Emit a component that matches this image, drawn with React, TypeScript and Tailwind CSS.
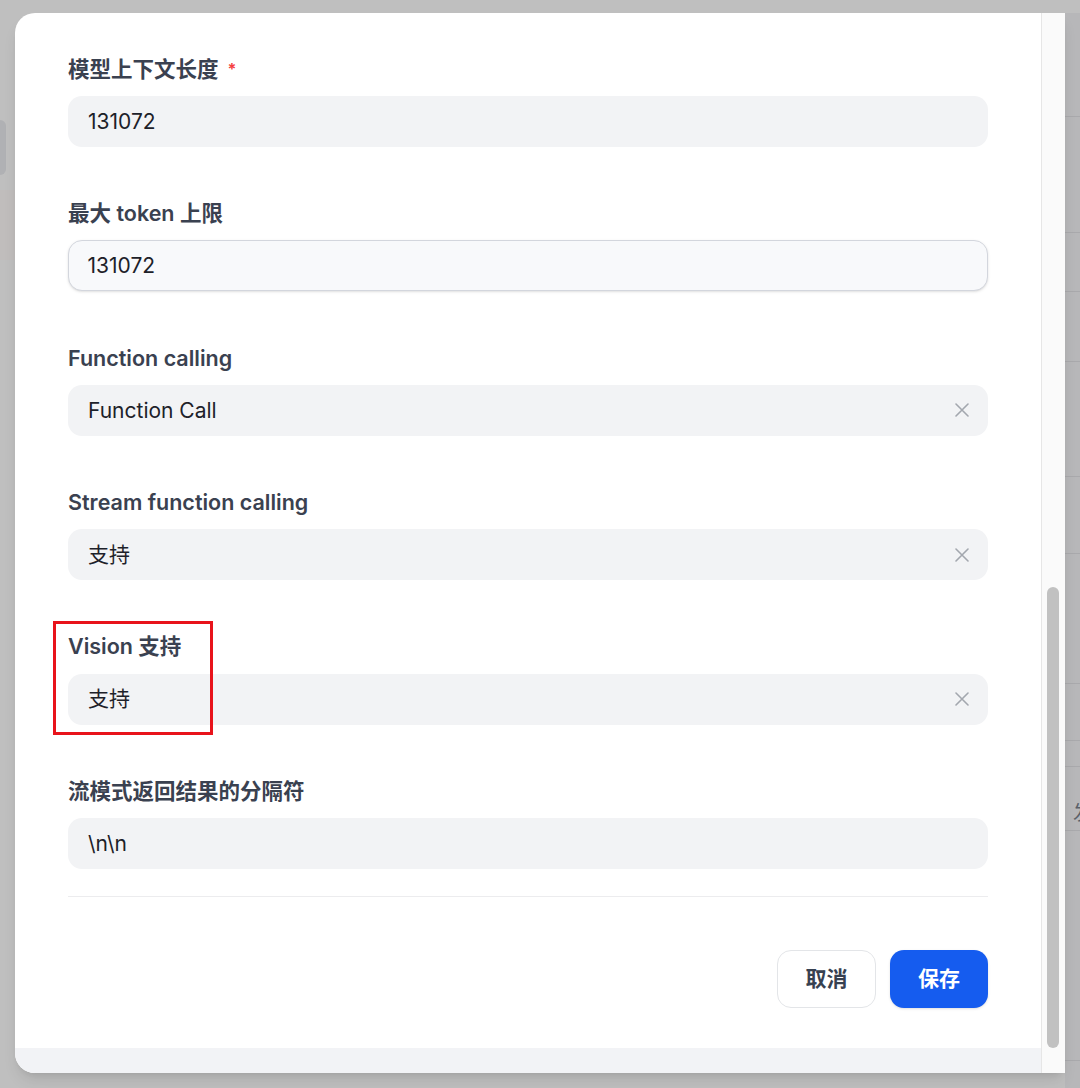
const font = { fontFamily: 'Inter, "Noto Sans CJK SC", sans-serif' };

type Field = {
  label: string;
  value: string;
  required?: boolean;
  clearable?: boolean;
  focused?: boolean;
  marked?: boolean;
};

const fields: Field[] = [
  { label: "模型上下文长度", value: "131072", required: true },
  { label: "最大 token 上限", value: "131072", focused: true },
  { label: "Function calling", value: "Function Call", clearable: true },
  { label: "Stream function calling", value: "支持", clearable: true },
  { label: "Vision 支持", value: "支持", clearable: true, marked: true },
  { label: "流模式返回结果的分隔符", value: "\\n\\n" },
];

const ClearIcon = () => (
  <svg width="14" height="14" viewBox="0 0 14 14" className="text-[#a3a7ae]">
    <path d="M1 1L13 13M13 1L1 13" stroke="currentColor" strokeWidth="1.6" strokeLinecap="round" />
  </svg>
);

const FormField = ({ field }: { field: Field }) => (
  <div className="relative">
    <div className="flex h-[28px] items-center text-[21.5px] font-semibold text-[#3a4150]">
      {field.label}
      {field.required && <span className="ml-[9px] text-[16px] font-bold text-[#f53f3f]">*</span>}
    </div>
    <div
      className={
        field.focused
          ? "mt-[13px] flex h-[51px] items-center rounded-[14px] border-[1.5px] border-[#d3d6dd] bg-[#f8f9fb] pl-[18.5px] pr-[18px] shadow-sm"
          : "mt-[13px] flex h-[51px] items-center rounded-[14px] bg-[#f2f3f5] pl-[20px] pr-[19.5px]"
      }
    >
      <span className="flex-1 text-[21px] text-[#1d2129]">{field.value}</span>
      {field.clearable && <ClearIcon />}
    </div>
    {field.marked && (
      <div className="absolute -left-[15px] -top-[12px] h-[114px] w-[160px] border-[3px] border-[#e8131b]" />
    )}
  </div>
);

const App = () => {
  const rightLines = [104, 116, 59, 70, 115, 77, 130, 57, 26, 64, 230];

  return (
    <div className="relative h-[1088px] w-[1080px] overflow-hidden bg-[#bfbfbf]" style={font}>
      {/* Background page behind the modal */}
      <div className="flex h-full">
        <div className="flex w-[15px] flex-col pt-[120px]">
          <div className="h-[55px] w-[6px] rounded-r-[6px] bg-[#b0b1b4]" />
          <div className="mt-[15px] h-[70px] w-[15px] bg-[#c4bbb8] opacity-40" />
        </div>
        <div className="flex-1" />
        <div className="mt-[13px] flex w-[15px] flex-col bg-[#b7b7b9]">
          {rightLines.map((h, i) => (
            <div key={i} className="overflow-hidden border-b border-[#a9a9ac]" style={{ height: h }}>
              {i === 9 && (
                <div className="pl-[8px] pt-[36px] text-[20px] leading-none text-[#5a5f68]">发</div>
              )}
            </div>
          ))}
        </div>
      </div>

      {/* Modal */}
      <div className="absolute left-[15px] top-[13px] flex h-[1060px] w-[1050px] overflow-hidden rounded-l-[20px] bg-white shadow-lg">
        <div className="flex flex-1 flex-col">
          <div className="flex-1 px-[53px] pt-[42px]">
            <div className="flex flex-col gap-[52.4px]">
              {fields.map((f) => (
                <FormField key={f.label} field={f} />
              ))}
            </div>
            <div className="mt-[27px] border-t border-[#ececee]" />
            <div className="mt-[53px] flex justify-end gap-[14px]">
              <button className="h-[58px] w-[99px] rounded-[14px] border border-[#e3e5e8] bg-white text-[21px] font-bold text-[#374151]">
                取消
              </button>
              <button className="h-[58px] w-[98px] rounded-[14px] bg-[#155cef] text-[21px] font-bold text-white shadow-sm">
                保存
              </button>
            </div>
          </div>
          <div className="h-[25px] bg-[#f2f3f6]" />
        </div>
        <div className="w-[24px] border-l border-[#e6e6e6] bg-[#fafafa]">
          <div className="ml-[5px] mt-[574px] h-[461px] w-[12px] rounded-full bg-[#c1c1c1]" />
        </div>
      </div>
    </div>
  );
};

export default App;
